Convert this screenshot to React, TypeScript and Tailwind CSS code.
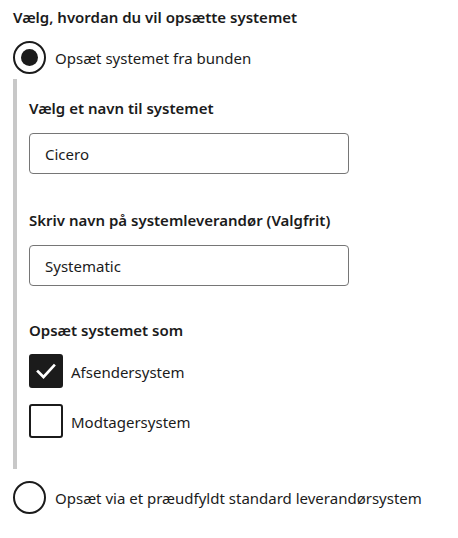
import { useState } from "react";

const font = { fontFamily: '"Noto Sans", "Open Sans", Arial, sans-serif' };

const Radio = ({ checked, label, onClick }: { checked: boolean; label: string; onClick: () => void }) => (
  <button type="button" onClick={onClick} className="flex items-center gap-[9px] text-left">
    <span className="w-[33px] h-[33px] rounded-full border-2 border-[#1b1b1b] flex items-center justify-center bg-white">
      {checked && <span className="w-[17px] h-[17px] rounded-full bg-[#1b1b1b]" />}
    </span>
    <span className="text-[15px] leading-5 text-[#1b1b1b]">{label}</span>
  </button>
);

const Checkbox = ({ checked, label, onClick }: { checked: boolean; label: string; onClick: () => void }) => (
  <button type="button" onClick={onClick} className="flex items-center gap-[8px] text-left">
    <span
      className={`w-[34px] h-[34px] rounded-[3px] border-2 border-[#1b1b1b] flex items-center justify-center ${
        checked ? "bg-[#1b1b1b]" : "bg-white"
      }`}
    >
      {checked && (
        <svg width="22" height="22" viewBox="0 0 22 22" fill="none">
          <path d="M3 11.5 L8.5 17 L19 5.5" stroke="white" strokeWidth="2.6" strokeLinecap="square" />
        </svg>
      )}
    </span>
    <span className="text-[15px] leading-5 text-[#1b1b1b] translate-y-[1px]">{label}</span>
  </button>
);

const Field = ({ label, value }: { label: string; value: string }) => (
  <div>
    <div className="text-[15px] leading-5 font-semibold text-[#1b1b1b]">{label}</div>
    <input
      defaultValue={value}
      className="mt-[15px] w-[320px] h-[41px] rounded-[4px] border border-[#767676] px-[15px] text-[15px] text-[#1b1b1b] outline-none"
      style={font}
    />
  </div>
);

export default function App() {
  const [mode, setMode] = useState("scratch");
  const [sender, setSender] = useState(true);
  const [receiver, setReceiver] = useState(false);

  return (
    <div className="bg-white min-h-screen px-[13px] pt-[7px]" style={font}>
      <div className="text-[15px] leading-5 font-semibold text-[#1b1b1b]">Vælg, hvordan du vil opsætte systemet</div>

      <div className="mt-[14px]">
        <Radio checked={mode === "scratch"} label="Opsæt systemet fra bunden" onClick={() => setMode("scratch")} />
      </div>

      <div className="mt-[5px] border-l-4 border-[#c8c8c8] pl-[12px] pt-[19px] pb-[31px]">
        <Field label="Vælg et navn til systemet" value="Cicero" />
        <div className="mt-[36px]">
          <Field label="Skriv navn på systemleverandør (Valgfrit)" value="Systematic" />
        </div>
        <div className="mt-[34px] text-[15px] leading-5 font-semibold text-[#1b1b1b]">Opsæt systemet som</div>
        <div className="mt-[14px] flex flex-col gap-[16px]">
          <Checkbox checked={sender} label="Afsendersystem" onClick={() => setSender(!sender)} />
          <Checkbox checked={receiver} label="Modtagersystem" onClick={() => setReceiver(!receiver)} />
        </div>
      </div>

      <div className="mt-[12px]">
        <Radio
          checked={mode === "vendor"}
          label="Opsæt via et præudfyldt standard leverandørsystem"
          onClick={() => setMode("vendor")}
        />
      </div>
    </div>
  );
}
